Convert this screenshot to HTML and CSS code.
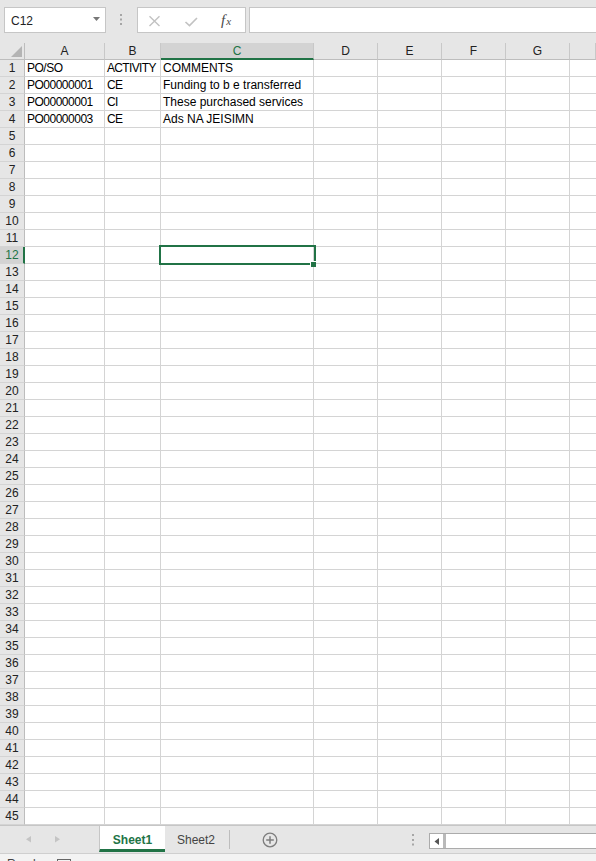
FILE: index.html
```html
<!DOCTYPE html>
<html>
<head>
<meta charset="utf-8">
<link rel="stylesheet" href="styles.css">
</head>
<body>
<div class="toolbar">
  <div class="namebox"><span>C12</span><svg class="dd" width="7" height="4" viewBox="0 0 7 4"><polygon points="0,0 7,0 3.5,4" fill="#777"/></svg></div>
  <div class="grip"><svg width="2" height="11" viewBox="0 0 2 11"><rect x="0" y="0" width="2" height="2" fill="#a6a6a6"/><rect x="0" y="4.5" width="2" height="2" fill="#a6a6a6"/><rect x="0" y="9" width="2" height="2" fill="#a6a6a6"/></svg></div>
  <div class="fbox">
    <svg width="70" height="24" viewBox="0 0 70 24"><path d="M11.5 8.2 L21.5 18 M21.5 8.2 L11.5 18" stroke="#c2c2c2" stroke-width="1.4" fill="none"/><path d="M47.5 14 L51.5 17.6 L59 10" stroke="#c2c2c2" stroke-width="1.6" fill="none"/></svg>
    <span class="fx"><span class="fx-f">f</span><span class="fx-x">x</span></span>
  </div>
  <div class="finput"></div>
</div>

<div class="sheet">
  <div class="corner"><svg width="24" height="16" viewBox="0 0 24 16"><polygon points="22,3 22,14 11,14" fill="#b4b4b4"/></svg></div>
  <div class="ch">A</div><div class="ch">B</div><div class="ch on">C</div><div class="ch">D</div><div class="ch">E</div><div class="ch">F</div><div class="ch">G</div><div class="ch"></div>

  <div class="rh">1</div><div class="c ca">PO/SO</div><div class="c cb">ACTIVITY</div><div class="c">COMMENTS</div><div class="c"></div><div class="c"></div><div class="c"></div><div class="c"></div><div class="c"></div>
  <div class="rh">2</div><div class="c ca">PO00000001</div><div class="c cb">CE</div><div class="c">Funding to b e transferred</div><div class="c"></div><div class="c"></div><div class="c"></div><div class="c"></div><div class="c"></div>
  <div class="rh">3</div><div class="c ca">PO00000001</div><div class="c cb">CI</div><div class="c">These purchased services</div><div class="c"></div><div class="c"></div><div class="c"></div><div class="c"></div><div class="c"></div>
  <div class="rh">4</div><div class="c ca">PO00000003</div><div class="c cb">CE</div><div class="c">Ads NA JEISIMN</div><div class="c"></div><div class="c"></div><div class="c"></div><div class="c"></div><div class="c"></div>
  <div class="rh">5</div><div class="c"></div><div class="c"></div><div class="c"></div><div class="c"></div><div class="c"></div><div class="c"></div><div class="c"></div><div class="c"></div>
  <div class="rh">6</div><div class="c"></div><div class="c"></div><div class="c"></div><div class="c"></div><div class="c"></div><div class="c"></div><div class="c"></div><div class="c"></div>
  <div class="rh">7</div><div class="c"></div><div class="c"></div><div class="c"></div><div class="c"></div><div class="c"></div><div class="c"></div><div class="c"></div><div class="c"></div>
  <div class="rh">8</div><div class="c"></div><div class="c"></div><div class="c"></div><div class="c"></div><div class="c"></div><div class="c"></div><div class="c"></div><div class="c"></div>
  <div class="rh">9</div><div class="c"></div><div class="c"></div><div class="c"></div><div class="c"></div><div class="c"></div><div class="c"></div><div class="c"></div><div class="c"></div>
  <div class="rh">10</div><div class="c"></div><div class="c"></div><div class="c"></div><div class="c"></div><div class="c"></div><div class="c"></div><div class="c"></div><div class="c"></div>
  <div class="rh">11</div><div class="c"></div><div class="c"></div><div class="c"></div><div class="c"></div><div class="c"></div><div class="c"></div><div class="c"></div><div class="c"></div>
  <div class="rh on">12</div><div class="c"></div><div class="c"></div><div class="c act"><div class="selbox"><div class="handle"></div></div></div><div class="c"></div><div class="c"></div><div class="c"></div><div class="c"></div><div class="c"></div>
  <div class="rh">13</div><div class="c"></div><div class="c"></div><div class="c"></div><div class="c"></div><div class="c"></div><div class="c"></div><div class="c"></div><div class="c"></div>
  <div class="rh">14</div><div class="c"></div><div class="c"></div><div class="c"></div><div class="c"></div><div class="c"></div><div class="c"></div><div class="c"></div><div class="c"></div>
  <div class="rh">15</div><div class="c"></div><div class="c"></div><div class="c"></div><div class="c"></div><div class="c"></div><div class="c"></div><div class="c"></div><div class="c"></div>
  <div class="rh">16</div><div class="c"></div><div class="c"></div><div class="c"></div><div class="c"></div><div class="c"></div><div class="c"></div><div class="c"></div><div class="c"></div>
  <div class="rh">17</div><div class="c"></div><div class="c"></div><div class="c"></div><div class="c"></div><div class="c"></div><div class="c"></div><div class="c"></div><div class="c"></div>
  <div class="rh">18</div><div class="c"></div><div class="c"></div><div class="c"></div><div class="c"></div><div class="c"></div><div class="c"></div><div class="c"></div><div class="c"></div>
  <div class="rh">19</div><div class="c"></div><div class="c"></div><div class="c"></div><div class="c"></div><div class="c"></div><div class="c"></div><div class="c"></div><div class="c"></div>
  <div class="rh">20</div><div class="c"></div><div class="c"></div><div class="c"></div><div class="c"></div><div class="c"></div><div class="c"></div><div class="c"></div><div class="c"></div>
  <div class="rh">21</div><div class="c"></div><div class="c"></div><div class="c"></div><div class="c"></div><div class="c"></div><div class="c"></div><div class="c"></div><div class="c"></div>
  <div class="rh">22</div><div class="c"></div><div class="c"></div><div class="c"></div><div class="c"></div><div class="c"></div><div class="c"></div><div class="c"></div><div class="c"></div>
  <div class="rh">23</div><div class="c"></div><div class="c"></div><div class="c"></div><div class="c"></div><div class="c"></div><div class="c"></div><div class="c"></div><div class="c"></div>
  <div class="rh">24</div><div class="c"></div><div class="c"></div><div class="c"></div><div class="c"></div><div class="c"></div><div class="c"></div><div class="c"></div><div class="c"></div>
  <div class="rh">25</div><div class="c"></div><div class="c"></div><div class="c"></div><div class="c"></div><div class="c"></div><div class="c"></div><div class="c"></div><div class="c"></div>
  <div class="rh">26</div><div class="c"></div><div class="c"></div><div class="c"></div><div class="c"></div><div class="c"></div><div class="c"></div><div class="c"></div><div class="c"></div>
  <div class="rh">27</div><div class="c"></div><div class="c"></div><div class="c"></div><div class="c"></div><div class="c"></div><div class="c"></div><div class="c"></div><div class="c"></div>
  <div class="rh">28</div><div class="c"></div><div class="c"></div><div class="c"></div><div class="c"></div><div class="c"></div><div class="c"></div><div class="c"></div><div class="c"></div>
  <div class="rh">29</div><div class="c"></div><div class="c"></div><div class="c"></div><div class="c"></div><div class="c"></div><div class="c"></div><div class="c"></div><div class="c"></div>
  <div class="rh">30</div><div class="c"></div><div class="c"></div><div class="c"></div><div class="c"></div><div class="c"></div><div class="c"></div><div class="c"></div><div class="c"></div>
  <div class="rh">31</div><div class="c"></div><div class="c"></div><div class="c"></div><div class="c"></div><div class="c"></div><div class="c"></div><div class="c"></div><div class="c"></div>
  <div class="rh">32</div><div class="c"></div><div class="c"></div><div class="c"></div><div class="c"></div><div class="c"></div><div class="c"></div><div class="c"></div><div class="c"></div>
  <div class="rh">33</div><div class="c"></div><div class="c"></div><div class="c"></div><div class="c"></div><div class="c"></div><div class="c"></div><div class="c"></div><div class="c"></div>
  <div class="rh">34</div><div class="c"></div><div class="c"></div><div class="c"></div><div class="c"></div><div class="c"></div><div class="c"></div><div class="c"></div><div class="c"></div>
  <div class="rh">35</div><div class="c"></div><div class="c"></div><div class="c"></div><div class="c"></div><div class="c"></div><div class="c"></div><div class="c"></div><div class="c"></div>
  <div class="rh">36</div><div class="c"></div><div class="c"></div><div class="c"></div><div class="c"></div><div class="c"></div><div class="c"></div><div class="c"></div><div class="c"></div>
  <div class="rh">37</div><div class="c"></div><div class="c"></div><div class="c"></div><div class="c"></div><div class="c"></div><div class="c"></div><div class="c"></div><div class="c"></div>
  <div class="rh">38</div><div class="c"></div><div class="c"></div><div class="c"></div><div class="c"></div><div class="c"></div><div class="c"></div><div class="c"></div><div class="c"></div>
  <div class="rh">39</div><div class="c"></div><div class="c"></div><div class="c"></div><div class="c"></div><div class="c"></div><div class="c"></div><div class="c"></div><div class="c"></div>
  <div class="rh">40</div><div class="c"></div><div class="c"></div><div class="c"></div><div class="c"></div><div class="c"></div><div class="c"></div><div class="c"></div><div class="c"></div>
  <div class="rh">41</div><div class="c"></div><div class="c"></div><div class="c"></div><div class="c"></div><div class="c"></div><div class="c"></div><div class="c"></div><div class="c"></div>
  <div class="rh">42</div><div class="c"></div><div class="c"></div><div class="c"></div><div class="c"></div><div class="c"></div><div class="c"></div><div class="c"></div><div class="c"></div>
  <div class="rh">43</div><div class="c"></div><div class="c"></div><div class="c"></div><div class="c"></div><div class="c"></div><div class="c"></div><div class="c"></div><div class="c"></div>
  <div class="rh">44</div><div class="c"></div><div class="c"></div><div class="c"></div><div class="c"></div><div class="c"></div><div class="c"></div><div class="c"></div><div class="c"></div>
  <div class="rh">45</div><div class="c"></div><div class="c"></div><div class="c"></div><div class="c"></div><div class="c"></div><div class="c"></div><div class="c"></div><div class="c"></div>
</div>

<div class="tabbar">
  <svg class="nav" width="99" height="26" viewBox="0 0 99 26"><polygon points="31,10 31,16.5 26,13.2" fill="#c4c4c4"/><polygon points="55,10 55,16.5 60,13.2" fill="#c4c4c4"/></svg>
  <div class="tab active">Sheet1</div>
  <div class="tab other">Sheet2</div>
  <div class="tabsep"></div>
  <svg class="addsheet" width="16" height="16" viewBox="0 0 16 16"><circle cx="8" cy="8" r="6.8" stroke="#7d7d7d" stroke-width="1.3" fill="none"/><path d="M8 4.2 V11.8 M4.2 8 H11.8" stroke="#7d7d7d" stroke-width="1.5"/></svg>
  <svg class="hgrip" width="2" height="12" viewBox="0 0 2 12"><rect x="0" y="0" width="2" height="2" fill="#a6a6a6"/><rect x="0" y="5" width="2" height="2" fill="#a6a6a6"/><rect x="0" y="9.5" width="2" height="2" fill="#a6a6a6"/></svg>
  <div class="hscroll">
    <div class="sb-btn"><svg width="5" height="7" viewBox="0 0 5 7"><polygon points="5,0 5,7 0.5,3.5" fill="#555"/></svg></div>
    <div class="sb-line"></div>
  </div>
</div>

<div class="status">
  <span>Ready</span>
  <span class="macro"></span>
</div>
</body>
</html>
```

FILE: styles.css
```css
* { box-sizing: border-box; }
html, body { margin: 0; padding: 0; }
body {
  width: 596px;
  height: 861px;
  overflow: hidden;
  background: #e6e6e6;
  font-family: "Liberation Sans", Arial, sans-serif;
  font-size: 12px;
  color: #222;
  display: flex;
  flex-direction: column;
}

/* formula bar */
.toolbar {
  flex: none;
  height: 43px;
  display: flex;
  align-items: flex-start;
  padding: 7px 0 0 4px;
  background: #e6e6e6;
}
.namebox {
  flex: none;
  width: 102px;
  height: 26px;
  background: #fff;
  border: 1px solid #c6c6c6;
  display: flex;
  align-items: center;
  justify-content: space-between;
  padding: 1px 5px 0 6px;
  font-size: 12px;
  color: #222;
}
.namebox .dd { margin-top: -3px; }
.grip {
  flex: none;
  width: 31px;
  height: 26px;
  padding: 7px 0 0 14px;
}
.grip svg { display: block; }
.fbox {
  flex: none;
  width: 109px;
  height: 26px;
  background: #fff;
  border: 1px solid #c6c6c6;
  display: flex;
  align-items: center;
}
.fbox svg { display: block; flex: none; }
.fx {
  margin-left: 13px;
  font-family: "Liberation Serif", "Times New Roman", serif;
  font-style: italic;
  color: #4a4a4a;
  line-height: 16px;
  padding-top: 1px;
}
.fx-f { font-size: 15px; }
.fx-x { font-size: 11px; margin-left: 1px; }
.finput {
  flex: 1;
  height: 26px;
  margin-left: 3px;
  background: #fff;
  border: 1px solid #c6c6c6;
  border-right: none;
}

/* grid */
.sheet {
  flex: none;
  display: grid;
  grid-template-columns: 25px 80px 56px 153px 64px 64px 64px 64px 1fr;
  grid-auto-rows: 17px;
  background: #fff;
}
.corner {
  background: #e6e6e6;
  border-right: 1px solid #bdbdbd;
  border-bottom: 1px solid #bdbdbd;
}
.corner svg { display: block; }
.ch {
  background: #e6e6e6;
  border-right: 1px solid #c8c8c8;
  border-bottom: 1px solid #bdbdbd;
  text-align: center;
  line-height: 15px;
  padding-top: 1px;
  color: #222;
}
.ch:last-child { border-right: none; }
.ch.on {
  background: #d3d3d3;
  color: #217346;
  border-bottom: 2px solid #217346;
}
.rh {
  background: #e6e6e6;
  border-right: 1px solid #bdbdbd;
  border-bottom: 1px solid #d4d4d4;
  text-align: center;
  line-height: 16px;
  color: #222;
}
.rh.on {
  background: #d3d3d3;
  color: #217346;
  border-right: 2px solid #217346;
  padding-left: 1px;
}
.c {
  border-right: 1px solid #d4d4d4;
  border-bottom: 1px solid #d4d4d4;
  padding-left: 2px;
  line-height: 16px;
  white-space: nowrap;
  overflow: hidden;
  color: #000;
}
.sheet > .c:nth-child(9n) { border-right: none; }
.ca { letter-spacing: -0.5px; }
.cb { letter-spacing: -0.65px; }
.c.act { position: relative; overflow: visible; }
.selbox {
  position: absolute;
  left: -2px;
  top: -2px;
  width: 157px;
  height: 20px;
  border: 2px solid #217346;
  z-index: 2;
}
.handle {
  position: absolute;
  right: -2px;
  bottom: -4px;
  width: 6px;
  height: 6px;
  background: #217346;
  border-left: 1px solid #fff;
  border-top: 1px solid #fff;
}

/* sheet tabs */
.tabbar {
  flex: none;
  height: 28px;
  border-top: 1px solid #c6c6c6;
  background: #e6e6e6;
  display: flex;
  align-items: flex-start;
}
.nav { display: block; flex: none; }
.tab {
  flex: none;
  height: 26px;
  padding-top: 6px;
  line-height: 16px;
  font-size: 12px;
  white-space: nowrap;
}
.tab.active {
  width: 66px;
  background: #fff;
  border-left: 1px solid #c6c6c6;
  border-bottom: 3px solid #217346;
  color: #217346;
  font-weight: bold;
  text-align: center;
}
.tab.other {
  width: 64px;
  padding-left: 12px;
  color: #444;
}
.tabsep {
  flex: none;
  width: 1px;
  height: 19px;
  margin-top: 4px;
  background: #bdbdbd;
}
.addsheet { display: block; flex: none; margin-left: 32px; margin-top: 6px; }
.hgrip { display: block; flex: none; margin-left: 134px; margin-top: 8px; }
.hscroll {
  flex: 1;
  height: 16px;
  margin-left: 15px;
  margin-top: 7px;
  border: 1px solid #ababab;
  border-right: none;
  background: #fff;
  display: flex;
}
.sb-btn {
  flex: none;
  width: 13px;
  display: flex;
  align-items: center;
  justify-content: center;
}
.sb-btn svg { display: block; }
.sb-line { flex: none; width: 3px; background: #b9b9b9; }

/* status bar */
.status {
  flex: 1;
  background: #f3f3f3;
  border-top: 1px solid #cfcfcf;
  display: flex;
  align-items: flex-start;
  padding: 2px 0 0 7px;
  font-size: 12px;
  line-height: 16px;
  color: #444;
  overflow: hidden;
}
.macro {
  flex: none;
  width: 14px;
  height: 14px;
  margin-left: 15px;
  margin-top: 3px;
  border: 1px solid #666;
}
```
